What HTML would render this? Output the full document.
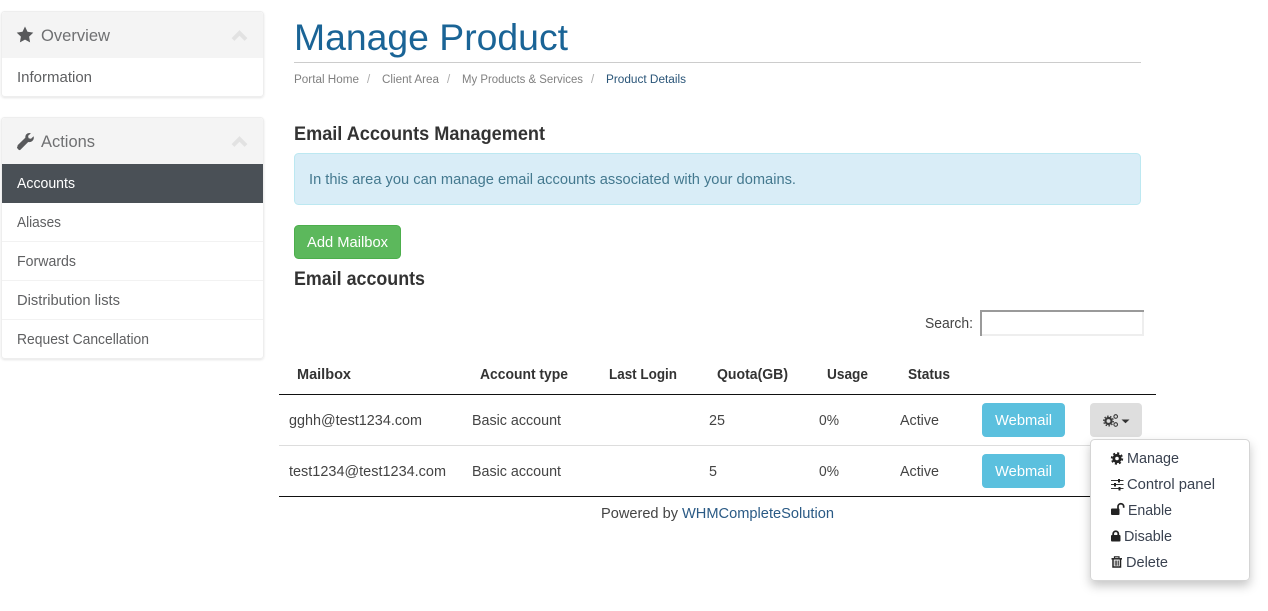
<!DOCTYPE html>
<html lang="en">
<head>
<meta charset="utf-8">
<title>Manage Product</title>
<style>
html,body{margin:0;padding:0;background:#fff;width:1268px;height:611px;overflow:hidden}
svg{display:block}
text{font-family:"Liberation Sans",Arial,sans-serif;font-size:14.5px;fill:#555}
.n{fill:#5f6062}
.l{fill:#6f7072;font-size:16.5px}
.t{fill:#444}
.b{font-weight:bold;fill:#333}
.h{font-weight:bold;font-size:19px;fill:#333}
.c{font-size:11.5px;fill:#808080}
.d{fill:#3a4250}
.w{fill:#fff}
</style>
</head>
<body>
<svg xmlns="http://www.w3.org/2000/svg" width="1268" height="611" viewBox="0 0 1268 611">
<defs>
<filter id="s1" x="-5%" y="-10%" width="110%" height="125%"><feDropShadow dx="0" dy="1" stdDeviation="1" flood-color="#000" flood-opacity=".1"/></filter>
<filter id="s2" x="-20%" y="-20%" width="140%" height="150%"><feDropShadow dx="0" dy="5" stdDeviation="5" flood-color="#000" flood-opacity=".22"/></filter>
</defs>

<!-- Sidebar panel 1 -->
<rect x="1.5" y="11.5" width="262" height="85" rx="3" fill="#fff" stroke="#eee" filter="url(#s1)"/>
<path d="M2 58V15a3 3 0 0 1 3-3H260a3 3 0 0 1 3 3V58Z" fill="#f4f4f4"/>
<path d="M25 26.5l2.5 5.3 5.8.8-4.2 4 1 5.800-5.100-2.800-5.100 2.800 1-5.800-4.200-4 5.800-.8Z" fill="#58595b"/>
<text x="41" y="41" class="l" textLength="69" lengthAdjust="spacingAndGlyphs">Overview</text>
<path d="M233 39.500l6.500-6.500 6.500 6.500" fill="none" stroke="#e2e2e2" stroke-width="4"/>
<text x="17" y="82" class="n" textLength="75" lengthAdjust="spacingAndGlyphs">Information</text>

<!-- Sidebar panel 2 -->
<rect x="1.5" y="117.5" width="262" height="241" rx="3" fill="#fff" stroke="#eee" filter="url(#s1)"/>
<path d="M2 164V121a3 3 0 0 1 3-3H260a3 3 0 0 1 3 3V164Z" fill="#f4f4f4"/>
<path d="M17.600 145.300l7.700-7.500a4.700 4.700 0 0 1 .7-3.200 4.600 4.600 0 0 1 4.900-1.300l-2.800 2.600.5 2.400 2.400.5 2.600-2.500a4.600 4.600 0 0 1-1.400 4.800 4.600 4.600 0 0 1-4 .9l-7.500 7.500a1.600 1.600 0 0 1-2.300 0l-.8-.9a1.600 1.600 0 0 1 0-2.300Z" fill="#58595b"/>
<text x="41" y="147" class="l" textLength="54" lengthAdjust="spacingAndGlyphs">Actions</text>
<path d="M233 145.500l6.500-6.500 6.500 6.500" fill="none" stroke="#e2e2e2" stroke-width="4"/>
<rect x="2" y="164" width="261" height="39" fill="#4a5056"/>
<text x="17" y="188" class="w" textLength="58" lengthAdjust="spacingAndGlyphs">Accounts</text>
<text x="17" y="227" class="n" textLength="44" lengthAdjust="spacingAndGlyphs">Aliases</text>
<rect x="2" y="241" width="261" height="1" fill="#f2f2f2"/>
<text x="17" y="266" class="n" textLength="59" lengthAdjust="spacingAndGlyphs">Forwards</text>
<rect x="2" y="280" width="261" height="1" fill="#f2f2f2"/>
<text x="17" y="305" class="n" textLength="103" lengthAdjust="spacingAndGlyphs">Distribution lists</text>
<rect x="2" y="319" width="261" height="1" fill="#f2f2f2"/>
<text x="17" y="344" class="n" textLength="132" lengthAdjust="spacingAndGlyphs">Request Cancellation</text>

<!-- Header -->
<text x="294" y="50" style="font-size:37px;fill:#1a6496" textLength="274" lengthAdjust="spacingAndGlyphs">Manage Product</text>
<rect x="294" y="62" width="847" height="1" fill="#ccc"/>
<text x="294" y="83" class="c" textLength="65" lengthAdjust="spacingAndGlyphs">Portal Home</text>
<text x="367" y="83" class="c" style="fill:#aaa">/</text>
<text x="382" y="83" class="c" textLength="57" lengthAdjust="spacingAndGlyphs">Client Area</text>
<text x="447" y="83" class="c" style="fill:#aaa">/</text>
<text x="462" y="83" class="c" textLength="121" lengthAdjust="spacingAndGlyphs">My Products &amp; Services</text>
<text x="591" y="83" class="c" style="fill:#aaa">/</text>
<text x="606" y="83" class="c" style="fill:#2a5578" textLength="80" lengthAdjust="spacingAndGlyphs">Product Details</text>

<text x="294" y="140" class="h" textLength="251" lengthAdjust="spacingAndGlyphs">Email Accounts Management</text>

<!-- Alert -->
<rect x="294.5" y="153.5" width="846" height="51" rx="4" fill="#d9edf7" stroke="#bce8f1"/>
<text x="309" y="184" style="fill:#44798f" textLength="487" lengthAdjust="spacingAndGlyphs">In this area you can manage email accounts associated with your domains.</text>

<!-- Add Mailbox -->
<rect x="294.5" y="225.5" width="106" height="33" rx="4" fill="#5cb85c" stroke="#4cae4c"/>
<text x="307" y="247" class="w" textLength="81" lengthAdjust="spacingAndGlyphs">Add Mailbox</text>

<text x="294" y="285" class="h" textLength="131" lengthAdjust="spacingAndGlyphs">Email accounts</text>

<!-- Search -->
<text x="925" y="328" class="t" textLength="48" lengthAdjust="spacingAndGlyphs">Search:</text>
<rect x="980" y="310" width="164" height="26" fill="#eee"/>
<path d="M980 310H1144V312H982V336H980Z" fill="#9a9a9a"/>
<rect x="982" y="312" width="160" height="22" fill="#fff"/>

<!-- Table -->
<text x="297" y="379" class="b" textLength="54" lengthAdjust="spacingAndGlyphs">Mailbox</text>
<text x="480" y="379" class="b" textLength="88" lengthAdjust="spacingAndGlyphs">Account type</text>
<text x="609" y="379" class="b" textLength="68" lengthAdjust="spacingAndGlyphs">Last Login</text>
<text x="717" y="379" class="b" textLength="71" lengthAdjust="spacingAndGlyphs">Quota(GB)</text>
<text x="827" y="379" class="b" textLength="41" lengthAdjust="spacingAndGlyphs">Usage</text>
<text x="908" y="379" class="b" textLength="42" lengthAdjust="spacingAndGlyphs">Status</text>
<rect x="279" y="394" width="877" height="1" fill="#111"/>

<text x="289" y="425" class="t" textLength="133" lengthAdjust="spacingAndGlyphs">gghh@test1234.com</text>
<text x="472" y="425" class="t" textLength="89" lengthAdjust="spacingAndGlyphs">Basic account</text>
<text x="709" y="425" class="t" textLength="16" lengthAdjust="spacingAndGlyphs">25</text>
<text x="819" y="425" class="t" textLength="20" lengthAdjust="spacingAndGlyphs">0%</text>
<text x="900" y="425" class="t" textLength="39" lengthAdjust="spacingAndGlyphs">Active</text>
<rect x="982" y="403" width="83" height="34" rx="4" fill="#5bc0de"/>
<text x="995" y="425" class="w" textLength="57" lengthAdjust="spacingAndGlyphs">Webmail</text>
<rect x="1090" y="403" width="52" height="34" rx="4" fill="#dedede"/>
<g fill="none" stroke="#3a3a3a">
<circle cx="1108.500" cy="421" r="3" stroke-width="2.200"/>
<circle cx="1108.500" cy="421" r="4.800" stroke-width="1.300" stroke-dasharray="1.500 1.510"/>
<circle cx="1115.700" cy="416.500" r="1.800" stroke-width="1.100"/>
<circle cx="1115.700" cy="424.500" r="1.800" stroke-width="1.100"/>
</g>
<path d="M1121.500 419.500h8l-4 3.700Z" fill="#333"/>
<rect x="279" y="445" width="812" height="1" fill="#ddd"/>

<text x="289" y="476" class="t" textLength="157" lengthAdjust="spacingAndGlyphs">test1234@test1234.com</text>
<text x="472" y="476" class="t" textLength="89" lengthAdjust="spacingAndGlyphs">Basic account</text>
<text x="709" y="476" class="t" textLength="8" lengthAdjust="spacingAndGlyphs">5</text>
<text x="819" y="476" class="t" textLength="20" lengthAdjust="spacingAndGlyphs">0%</text>
<text x="900" y="476" class="t" textLength="39" lengthAdjust="spacingAndGlyphs">Active</text>
<rect x="982" y="454" width="83" height="34" rx="4" fill="#5bc0de"/>
<text x="995" y="476" class="w" textLength="57" lengthAdjust="spacingAndGlyphs">Webmail</text>
<rect x="279" y="496" width="812" height="1" fill="#111"/>

<text x="601" y="518" class="t" textLength="77" lengthAdjust="spacingAndGlyphs">Powered by</text>
<text x="682" y="518" style="fill:#2a5a85" textLength="152" lengthAdjust="spacingAndGlyphs">WHMCompleteSolution</text>

<!-- Dropdown -->
<rect x="1090.5" y="439.5" width="159" height="141" rx="4" fill="#fff" stroke="#d5d5d5" filter="url(#s2)"/>

<!-- Manage -->
<g fill="none" stroke="#222">
<circle cx="1117" cy="458.500" r="3.200" stroke-width="2.800"/>
<circle cx="1117" cy="458.500" r="5.300" stroke-width="1.800" stroke-dasharray="2.100 2.060"/>
</g>
<text x="1127" y="463" class="d" textLength="52" lengthAdjust="spacingAndGlyphs">Manage</text>
<!-- Control panel -->
<path d="M1111 480.500h12.500M1111 484.500h12.500M1111 488.500h12.500" stroke="#333" stroke-width="1"/>
<rect x="1118" y="479" width="2" height="3.500" fill="#222"/>
<rect x="1114" y="483" width="2" height="3.500" fill="#222"/>
<rect x="1118.500" y="487" width="2" height="3.500" fill="#222"/>
<text x="1127" y="489" class="d" textLength="88" lengthAdjust="spacingAndGlyphs">Control panel</text>
<!-- Enable -->
<rect x="1111" y="508.500" width="8.500" height="6.500" rx="1" fill="#222"/>
<path d="M1118 509v-2.200a2.800 2.800 0 0 1 5.700-.4v1.400" fill="none" stroke="#222" stroke-width="1.700"/>
<text x="1128" y="515" class="d" textLength="44" lengthAdjust="spacingAndGlyphs">Enable</text>
<!-- Disable -->
<rect x="1111" y="535" width="9.500" height="6.500" rx="1" fill="#222"/>
<path d="M1113.200 535.500v-1.700a2.550 2.550 0 0 1 5.100 0v1.700" fill="none" stroke="#222" stroke-width="1.800"/>
<text x="1124" y="541" class="d" textLength="48" lengthAdjust="spacingAndGlyphs">Disable</text>
<!-- Delete -->
<path d="M1111.500 558.800h10.500" stroke="#222" stroke-width="1.500"/>
<path d="M1114.500 558v-1.200h4.500v1.200" fill="none" stroke="#222" stroke-width="1.200"/>
<path d="M1113 559v8h7.500v-8" fill="none" stroke="#222" stroke-width="1.500"/>
<path d="M1115.200 560.500v5.200M1116.750 560.500v5.200M1118.300 560.500v5.200" stroke="#222" stroke-width=".9"/>
<text x="1126" y="567" class="d" textLength="42" lengthAdjust="spacingAndGlyphs">Delete</text>
</svg>
</body>
</html>
